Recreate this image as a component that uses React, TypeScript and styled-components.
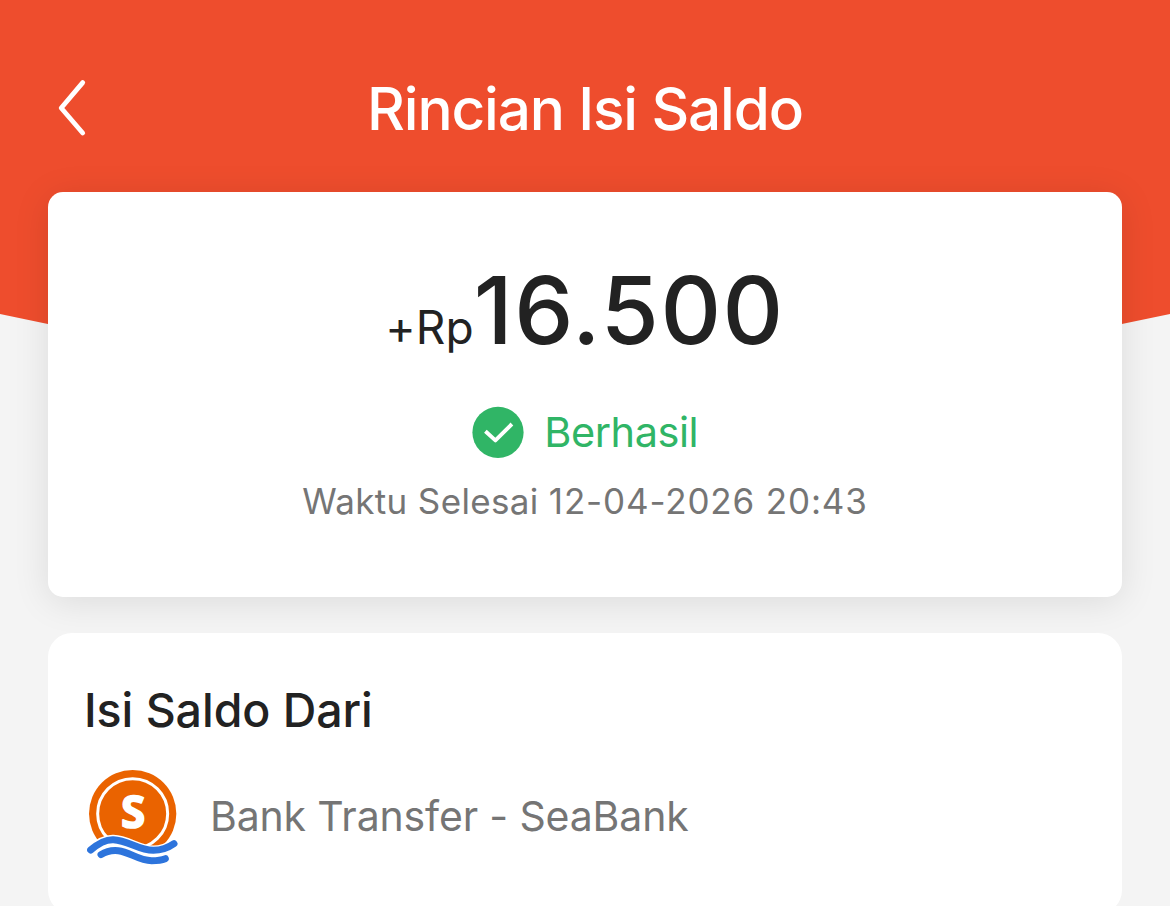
import React from 'react'
import styled, { createGlobalStyle } from 'styled-components'

const GlobalStyle = createGlobalStyle`
  body {
    margin: 0;
    background-color: #f4f4f4;
    font-family: Inter, 'Liberation Sans', sans-serif;
    overflow: hidden;
  }
`
const StyledPage = styled.div`
  box-sizing: border-box;
  height: 906px;
  padding: 0 48px;
  overflow: hidden;
  background: #f4f4f4;
  display: flex;
  flex-direction: column;
`
const StyledBackdrop = styled.div`
  position: absolute;
  top: 0;
  left: 0;
  width: 100%;
  height: 436px;
  background-color: #ee4d2d;
  clip-path: polygon(0 0, 100% 0, 100% 314px, 50% 436px, 0 314px);
`
const StyledNav = styled.header`
  position: relative;
  flex: none;
  box-sizing: border-box;
  height: 192px;
  padding-top: 26px;
  display: grid;
  grid-template-columns: 48px 1fr 48px;
  align-items: center;
`
const StyledBack = styled.button`
  display: flex;
  padding: 0;
  margin-left: 8px;
  border: 0;
  background: none;
`
const StyledTitle = styled.h1`
  margin: 0;
  color: #fff;
  font-size: 58.5px;
  font-weight: 500;
  letter-spacing: -1.15px;
  line-height: 70px;
  text-align: center;
  white-space: nowrap;
`
const StyledCard = styled.section<{ $height: number, $radius: number, $raised?: boolean }>`
  position: relative;
  flex: none;
  box-sizing: border-box;
  height: ${p => p.$height}px;
  border-radius: ${p => p.$radius}px;
  background-color: #fff;
  ${p => p.$raised && 'box-shadow: 0 5px 36px rgba(0, 0, 0, 0.1);'}
`
const StyledSummary = styled(StyledCard)`
  padding-top: 64px;
  display: flex;
  flex-direction: column;
  align-items: center;
`
const StyledAmount = styled.div`
  display: flex;
  align-items: baseline;
  height: 108px;
  line-height: 108px;
  font-size: 94px;
  font-weight: 500;
  letter-spacing: 1.5px;
  color: #222;
`
const StyledCurrency = styled.span`
  font-size: 46px;
  font-weight: 400;
  letter-spacing: 0.1px;
  font-feature-settings: 'calt' 0;
`
const StyledStatus = styled.div`
  display: flex;
  align-items: center;
  gap: 20.5px;
  height: 52px;
  margin-top: 42px;
  font-size: 41.5px;
  letter-spacing: -0.45px;
  color: #30b566;
`
const StyledTime = styled.div`
  height: 44px;
  margin-top: 21px;
  line-height: 44px;
  font-size: 35px;
  letter-spacing: 0.35px;
  color: #757575;
`
const StyledDate = styled.span`
  letter-spacing: 0.85px;
`
const StyledSource = styled(StyledCard)`
  margin-top: 36px;
  padding: 47px 36px 0;
`
const StyledHeading = styled.h2`
  margin: 0;
  line-height: 60px;
  font-size: 46.5px;
  font-weight: 500;
  letter-spacing: -0.05px;
  color: #222;
`
const StyledBank = styled.div`
  display: flex;
  align-items: center;
  gap: 32px;
  height: 95px;
  margin: 30px 0 0 3px;
  font-size: 41px;
  letter-spacing: -0.15px;
  color: #757575;
`
const StyledBankName = styled.span`
  padding-bottom: 3px;
`

const BackIcon = () => (
  <svg width="32" height="60" viewBox="0 0 32 60" fill="none" stroke="#fff" strokeWidth="4.8" strokeLinecap="round" strokeLinejoin="round">
    <path d="M26.7 3.6 5.2 29 26.7 54" />
  </svg>
)

const CheckIcon = () => (
  <svg width="52" height="52" viewBox="0 0 52 52">
    <circle cx="26" cy="26.4" r="25.6" fill="#30b566" />
    <path d="M13.4 25.2 23.4 34.4 39.9 18" fill="none" stroke="#fff" strokeWidth="3.9" strokeLinejoin="round" />
  </svg>
)

const wave = 'M62 285C85 265 105 253 130 254C175 256 205 286 250 286C275 286 295 278 312 266'

const SeaBankLogo = () => (
  <svg width="91" height="95" viewBox="51 45 273 285">
    <circle cx="188" cy="176" r="131" fill="#ea6300" />
    <circle cx="188" cy="176" r="105" fill="none" stroke="#fff" strokeWidth="9" />
    <text x="189" y="220" fill="#fff" stroke="#fff" strokeWidth="5" strokeLinejoin="round" textAnchor="middle" fontFamily="Noto Sans" fontWeight="700" fontSize="132">S</text>
    <path d={`${wave}V330H62Z`} fill="#fff" />
    <g fill="none" strokeLinecap="round">
      <path d={wave} stroke="#fff" strokeWidth="29" />
      <path d={wave} stroke="#2d74dc" strokeWidth="21" />
      <path d="M93 299C108 289 125 285 145 287C180 291 205 317 245 317C262 317 276 315 286 311" stroke="#2d74dc" strokeWidth="21" />
    </g>
  </svg>
)

const App = () => (
  <>
    <GlobalStyle />
    <StyledPage>
      <StyledBackdrop />
      <StyledNav>
        <StyledBack aria-label="Kembali"><BackIcon /></StyledBack>
        <StyledTitle>Rincian Isi Saldo</StyledTitle>
      </StyledNav>
      <StyledSummary $height={405} $radius={15} $raised>
        <StyledAmount>
          <StyledCurrency>+Rp</StyledCurrency>
          16.500
        </StyledAmount>
        <StyledStatus>
          <CheckIcon />
          Berhasil
        </StyledStatus>
        <StyledTime>Waktu Selesai <StyledDate>12-04-2026 20:43</StyledDate></StyledTime>
      </StyledSummary>
      <StyledSource $height={281} $radius={24}>
        <StyledHeading>Isi Saldo Dari</StyledHeading>
        <StyledBank>
          <SeaBankLogo />
          <StyledBankName>Bank Transfer - SeaBank</StyledBankName>
        </StyledBank>
      </StyledSource>
    </StyledPage>
  </>
)

export default App
